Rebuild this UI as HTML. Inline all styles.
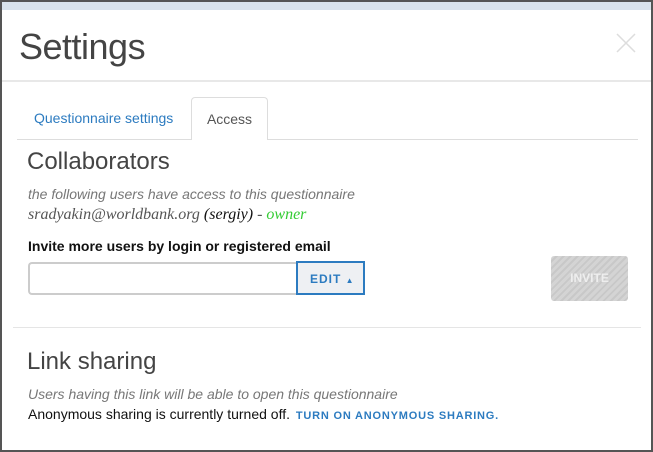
<!DOCTYPE html>
<html><head><style>
*{box-sizing:border-box;margin:0;padding:0}
body{width:653px;height:452px;overflow:hidden;background:#555;font-family:"Liberation Sans",sans-serif;position:relative}
.m{position:absolute;left:2px;top:2px;width:649px;height:448px;background:#fff}
.strip{position:absolute;left:0;top:0;width:649px;height:8px;background:#d9e3ec}
.t{position:absolute;left:17px;top:24px;font-size:36px;color:#444;font-family:"Liberation Sans",sans-serif;font-weight:normal;letter-spacing:-0.5px}
.x{position:absolute;left:614px;top:31px}
.hr1{position:absolute;left:0;top:78px;width:649px;height:2px;background:#e8e8e8}
.tab1{position:absolute;left:32px;top:108px;font-size:14px;color:#2c7bc0}
.tab2{position:absolute;left:189px;top:95px;width:77px;height:43px;border:1px solid #ddd;border-bottom:none;border-radius:4px 4px 0 0;background:#fff;font-size:14px;color:#555;padding-top:13px;text-align:center}
.tl{position:absolute;left:15px;top:137px;width:621px;height:1px;background:#ddd}
.h2{position:absolute;left:25px;font-size:24px;color:#444;font-family:"Liberation Sans",sans-serif}
.i{position:absolute;left:26px;font-size:14px;color:#777;font-style:italic}
.s{position:absolute;left:26px;top:204px;font-size:16px;font-family:"Liberation Serif",serif;font-style:italic;color:#555}
.b{position:absolute;left:26px;top:236px;font-size:14px;font-weight:bold;color:#111}
.inp{position:absolute;left:26px;top:260px;width:270px;height:33px;border:2px solid #ccc;border-right:none;border-radius:4px 0 0 4px}
.edit{position:absolute;left:294px;top:259px;width:69px;height:34px;border:2px solid #2c7bc0;background:#eef0f3;color:#2c7bc0;font-size:12px;font-weight:bold;letter-spacing:1px;padding:9px 0 0 12px}
.inv{position:absolute;left:549px;top:254px;width:77px;height:45px;border-radius:3px;background:repeating-linear-gradient(135deg,#d4d4d4 0 3px,#c8c8c8 3px 5px);color:#eee;font-size:12px;font-weight:bold;text-align:center;padding-top:15px}
.hr2{position:absolute;left:11px;top:325px;width:628px;height:1px;background:#e5e5e5}
.an{position:absolute;left:26px;top:404px;font-size:14px;color:#111}
.an span{color:#2c7bc0;font-weight:bold;font-size:11px;letter-spacing:0.8px;margin-left:2px}
</style></head><body><div class="m">
<div class="strip"></div>
<div class="t">Settings</div>
<svg class="x" width="20" height="20"><path d="M1 1L19 19M19 1L1 19" stroke="#ddd" stroke-width="1.5"/></svg>
<div class="hr1"></div>
<div class="tl"></div>
<div class="tab1">Questionnaire settings</div>
<div class="tab2">Access</div>
<div class="h2" style="top:146px">Collaborators</div>
<div class="i" style="top:184px">the following users have access to this questionnaire</div>
<div class="s">sradyakin@worldbank.org <span style="color:#111">(sergiy)</span> - <span style="color:#3c3">owner</span></div>
<div class="b">Invite more users by login or registered email</div>
<div class="inp"></div>
<div class="edit">EDIT <span style="font-size:8px">▲</span></div>
<div class="inv">INVITE</div>
<div class="hr2"></div>
<div class="h2" style="top:346px">Link sharing</div>
<div class="i" style="top:384px">Users having this link will be able to open this questionnaire</div>
<div class="an">Anonymous sharing is currently turned off. <span>TURN ON ANONYMOUS SHARING.</span></div>
</div></body></html>
